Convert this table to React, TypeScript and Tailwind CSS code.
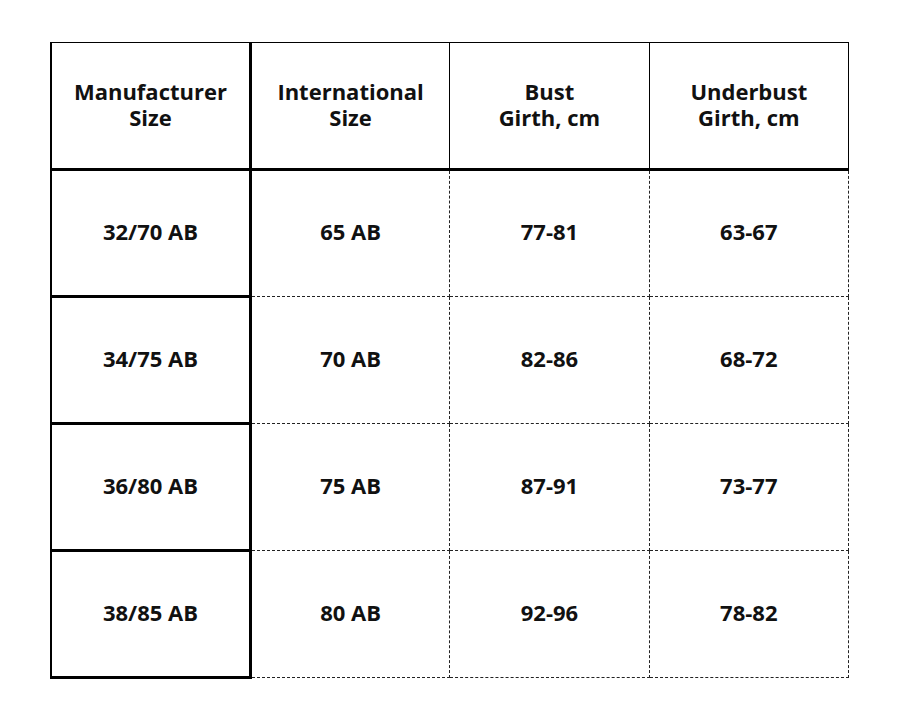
const HEAD = ["Manufacturer\nSize", "International\nSize", "Bust\nGirth, cm", "Underbust\nGirth, cm"];

const ROWS = [
  ["32/70 AB", "65 AB", "77-81", "63-67"],
  ["34/75 AB", "70 AB", "82-86", "68-72"],
  ["36/80 AB", "75 AB", "87-91", "73-77"],
  ["38/85 AB", "80 AB", "92-96", "78-82"],
];

export default function App() {
  return (
    <div className="w-[900px] h-[720px] bg-white pt-[42px] pl-[50px]" style={{ fontFamily: '"Open Sans", "Noto Sans", sans-serif' }}>
      <table className="w-[799px] table-fixed border-collapse text-[22px] font-bold leading-[26px] text-[#111]">
        <thead>
          <tr className="h-[127px]">
            {HEAD.map((h, i) => (
              <th
                key={h}
                className={
                  "whitespace-pre-line border-[1.5px] border-solid border-black border-b-[3px] text-center align-middle font-bold pb-[4px] " +
                  (i === 0 ? "border-l-2 border-r-[3px]" : "")
                }
              >
                {h}
              </th>
            ))}
          </tr>
        </thead>
        <tbody>
          {ROWS.map((r) => (
            <tr key={r[0]} className="h-[127px]">
              {r.map((c, i) =>
                i === 0 ? (
                  <td key={i} className="border-2 border-solid border-black border-r-[3px] border-b-[3px] text-center align-middle pb-[5px]">
                    {c}
                  </td>
                ) : (
                  <td key={i} className="border-[1.5px] border-dashed border-[#222] text-center align-middle pb-[5px]">
                    {c}
                  </td>
                )
              )}
            </tr>
          ))}
        </tbody>
      </table>
    </div>
  );
}
